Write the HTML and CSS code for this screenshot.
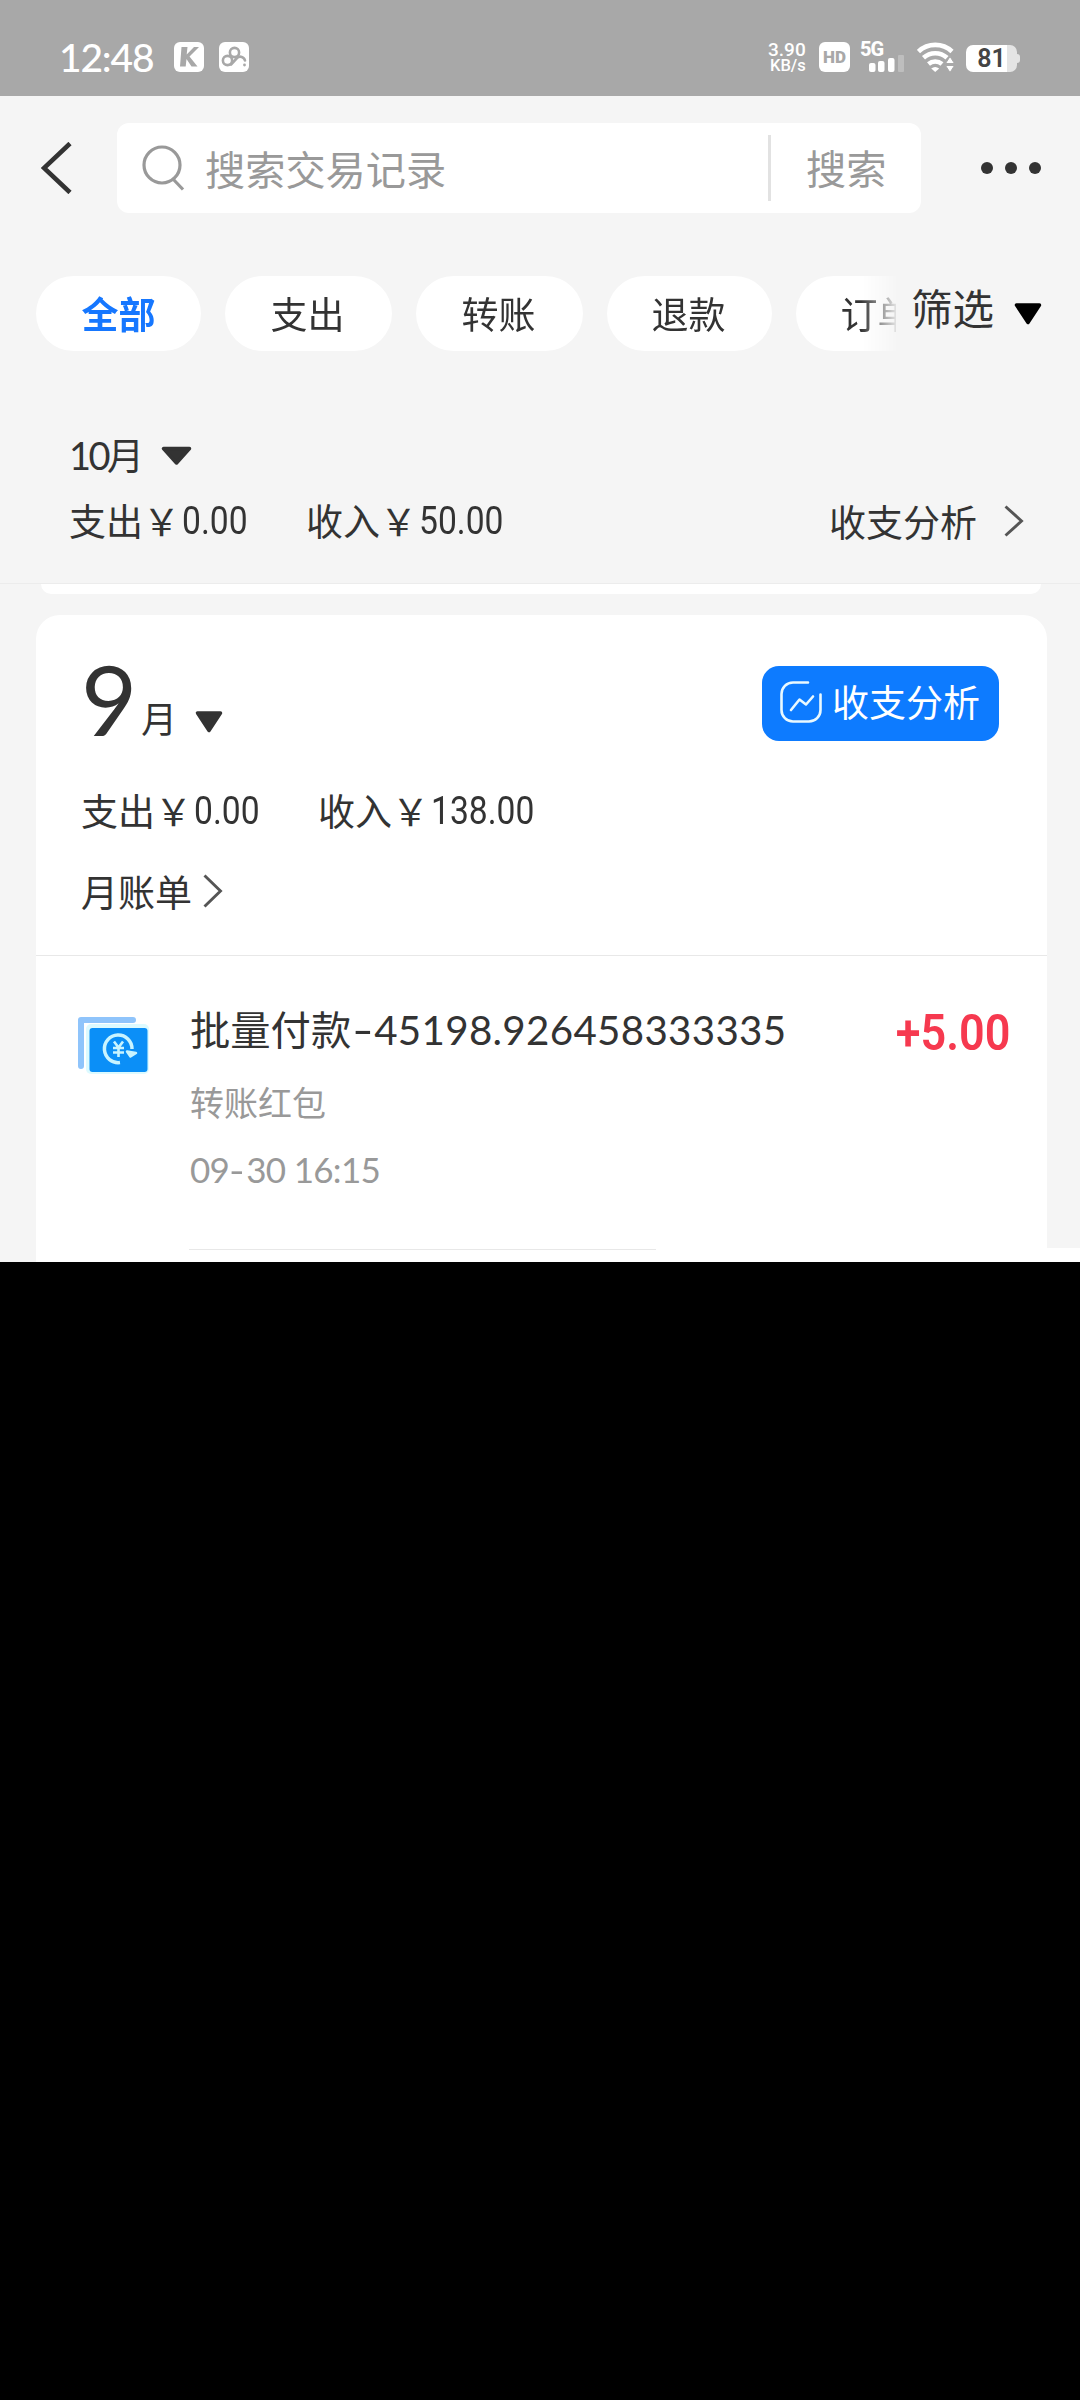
FILE: index.html
```html
<!DOCTYPE html>
<html lang="zh-CN">
<head>
<meta charset="utf-8">
<title>账单</title>
<link rel="stylesheet" href="styles.css">
</head>
<body>
<div class="screen">
  <header class="status">
    <span class="time">12:48</span>
    <svg class="app-k" width="30" height="30" viewBox="0 0 30 30"><rect width="30" height="30" rx="6" fill="#fff"/><path d="M7.500 5h6l-.8 7.500L20 5h5l-9.500 9.500L23.500 24.500h-6L12.500 17l-.8 7.500H6z" fill="#a8a8a8"/></svg>
    <svg class="app-cloud" width="30" height="30" viewBox="0 0 30 30"><rect width="30" height="30" rx="6" fill="#fff"/><g fill="none" stroke="#a8a8a8" stroke-width="2.600" stroke-linecap="round"><circle cx="15.500" cy="10.500" r="4.600"/><circle cx="8.500" cy="18.500" r="4.600"/><path d="M12 22.500l6-6.500a4.800 4.800 0 0 1 8 2.500"/></g><circle cx="25.500" cy="23" r="1.400" fill="#a8a8a8"/></svg>
    <div class="speed"><span>3.90</span><span>KB/s</span></div>
    <span class="hd">HD</span>
    <div class="signal">
      <span class="gen">5G</span>
      <svg width="36" height="17" viewBox="0 0 36 17" fill="#fff"><rect y="8" width="6.500" height="9" rx="2"/><rect x="9" y="6" width="6.500" height="11" rx="2"/><rect x="19" y="3" width="6.500" height="14" rx="2"/><rect x="29" width="6" height="17" rx="1" opacity=".25"/></svg>
    </div>
    <svg class="wifi" width="37" height="30" viewBox="0 0 37 30"><g fill="none" stroke="#fff" stroke-width="4.600"><path d="M1.500 9.500a24.500 24.500 0 0 1 33.500 0"/><path d="M6.500 15.800a17.500 17.500 0 0 1 23.500 0"/><path d="M11.500 22a10.500 10.500 0 0 1 13.500 0"/></g><path d="M14.200 26.500q4-3 8 0l-4 3.500z" fill="#fff"/><path d="M33 14.500l4.500 7h-9zM33 30.500l-4.500-7h9z" fill="#fff" stroke="#a8a8a8" stroke-width="1"/></svg>
    <div class="battery"><span>81</span></div>
  </header>

  <nav class="topbar">
    <svg class="back" width="32" height="52" viewBox="0 0 32 52"><path d="M29 1.500L3 26L29 50.500" fill="none" stroke="#333" stroke-width="4.600"/></svg>
    <div class="search">
      <svg width="44" height="48" viewBox="0 0 44 48" fill="none" stroke="#999" stroke-width="3.200"><circle cx="20" cy="21" r="18"/><path d="M31 35l10 10.500"/></svg>
      <span class="placeholder">搜索交易记录</span>
      <span class="search-btn">搜索</span>
    </div>
    <div class="more"><i></i><i></i><i></i></div>
  </nav>

  <div class="filters">
    <div class="chips">
      <span class="chip active">全部</span>
      <span class="chip mid">支出</span>
      <span class="chip mid">转账</span>
      <span class="chip">退款</span>
      <span class="chip">订单</span>
    </div>
    <span class="filter">筛选</span>
    <svg class="filter-arrow" width="28" height="22" viewBox="0 0 28 22"><path d="M2.500 2h23L14 19.500z" stroke="#000" stroke-width="3.500" stroke-linejoin="round"/></svg>
  </div>

  <section class="sticky">
    <div class="month-row">
      <span class="month"><span class="latin">10</span>月</span>
      <svg width="31" height="20" viewBox="0 0 31 20"><path d="M2.500 2.500h26L15.500 17z" fill="#333" stroke="#333" stroke-width="3.500" stroke-linejoin="round"/></svg>
    </div>
    <div class="totals">
      <span class="total"><span>支出￥</span><span class="num">0.00</span></span>
      <span class="total"><span>收入￥</span><span class="num">50.00</span></span>
      <span class="analysis">收支分析</span>
      <svg width="20" height="32" viewBox="0 0 20 32"><path d="M1.500 1.500L17.500 16L1.500 30.500" fill="none" stroke="#555" stroke-width="2.900"/></svg>
    </div>
  </section>
  <div class="prev-card"></div>

  <section class="card">
    <div class="summary">
      <div class="heading">
        <span class="big">9</span><span class="unit">月</span>
        <svg class="tri" width="28" height="22" viewBox="0 0 28 22"><path d="M2.500 2h23L14 19.500z" fill="#333" stroke="#333" stroke-width="3.500" stroke-linejoin="round"/></svg>
        <span class="button">
          <svg width="42" height="42" viewBox="0 0 42 42" fill="none" stroke="#e9f9ff" stroke-width="2.600" stroke-linecap="round"><path d="M28 1.500H13A11.500 11.500 0 0 0 1.500 13v16A11.500 11.500 0 0 0 13 40.500h16A11.500 11.500 0 0 0 40.500 29V13.500"/><path d="M11 29l8.500-10.500 6.500 5 7-8" stroke-linejoin="round"/></svg>
          收支分析
        </span>
      </div>
      <div class="totals">
        <span class="total"><span>支出￥</span><span class="num">0.00</span></span>
        <span class="total"><span>收入￥</span><span class="num">138.00</span></span>
      </div>
      <div class="bill">
        <span>月账单</span>
        <svg width="20" height="34" viewBox="0 0 20 34"><path d="M1.500 1.500L17.500 17L1.500 32.500" fill="none" stroke="#555" stroke-width="2.900"/></svg>
      </div>
    </div>
    <article class="record">
      <svg class="record-icon" width="72" height="58" viewBox="0 0 72 58">
        <path d="M4 50V4H56" fill="none" stroke="#8fc4fb" stroke-width="6" stroke-linejoin="round" stroke-linecap="round"/>
        <rect x="9" y="8" width="63" height="50" rx="5" fill="#dcfaff"/>
        <rect x="12.500" y="12" width="58" height="44" rx="3" fill="#0b8ff7"/>
        <path d="M43 46.500A13.800 13.800 0 1 1 55 33" fill="none" stroke="#c9f4ff" stroke-width="3.500"/>
        <path d="M50 35.500l9 1.500-5.500 3.500z" fill="#c9f4ff" stroke="#c9f4ff" stroke-width="2.500" stroke-linejoin="round"/>
        <path d="M37 25.500l4.500 6 4.500-6M41.500 31v10M36 32h11M36 36.500h11" fill="none" stroke="#c9f4ff" stroke-width="2.600"/>
      </svg>
      <div class="record-body">
        <span class="title">批量付款<span class="latin"><span class="dash">-</span>45198.926458333335</span></span>
        <span class="kind">转账红包</span>
        <span class="date">09<span class="dash">-</span>30 16:15</span>
      </div>
      <span class="amount">+5.00</span>
    </article>
  </section>
  <div class="tail"><i></i></div>
</div>
</body>
</html>
```
FILE: styles.css
```css
* { box-sizing: border-box; }
body {
  margin: 0;
  background: #000;
  color: #333;
  font-family: "Noto Sans CJK SC", sans-serif;
}
svg { display: block; flex: none; }
span, i { flex: none; white-space: nowrap; }
.screen {
  width: 1080px;
  height: 1262px;
  background: #f5f5f5;
  overflow: hidden;
}
.latin { font-family: Lato, sans-serif; }
.dash { display: inline-block; transform: scaleX(1.2); transform-origin: 0 50%; }

/* status bar */
.status {
  height: 96px;
  padding: 42px 0 0 59px;
  display: flex;
  align-items: flex-start;
  background: #a8a8a8;
  color: #fff;
}
.time {
  width: 115px;
  font: 500 39px/30px Lato, sans-serif;
  letter-spacing: -1.2px;
}
.app-cloud { margin-left: 15px; }
.speed {
  width: 50px;
  margin-left: 519px;
  display: flex;
  flex-direction: column;
  font: 500 19px/15px Roboto, sans-serif;
}
.speed span + span { font-size: 16.500px; line-height: 18px; padding-left: 2px; }
.hd {
  width: 31px;
  height: 30px;
  margin-left: 1px;
  border-radius: 6px;
  background: #fff;
  color: #a8a8a8;
  text-align: center;
  font: 900 17px/31px Roboto, sans-serif;
}
.signal {
  width: 47px;
  margin-left: 10px;
}
.gen {
  display: block;
  height: 14px;
  font: 800 20px/15px Roboto, sans-serif;
  letter-spacing: -1px;
}
.signal svg { margin-left: 9px; margin-top: -1px; }
.wifi { margin-left: 10px; }
.battery {
  width: 51px;
  height: 27px;
  margin: 3px 0 0 12px;
  position: relative;
  border-radius: 7px;
  background: linear-gradient(90deg, #fff 41px, #e4e4e4 41px);
  color: #444;
  text-align: center;
  font: 600 25px/28px Roboto, sans-serif;
}
.battery::after {
  content: "";
  position: absolute;
  left: 51px;
  top: 9px;
  width: 3px;
  height: 9px;
  border-radius: 0 3px 3px 0;
  background: #e4e4e4;
}

/* search */
.topbar {
  height: 144px;
  padding-left: 41px;
  display: flex;
  align-items: center;
}
.search {
  width: 804px;
  height: 90px;
  margin-left: 44px;
  padding-left: 25px;
  display: flex;
  align-items: center;
  border-radius: 12px;
  background: #fff;
  color: #999;
  font-size: 40.200px;
  line-height: 64px;
}
.placeholder { width: 563px; margin-left: 19px; }
.search-btn {
  height: 66px;
  padding-left: 35px;
  border-left: 3px solid #e2e2e2;
}
.more {
  display: flex;
  gap: 12px;
  margin-left: 60px;
}
.more i { width: 12px; height: 12px; border-radius: 50%; background: #333; }

/* filters */
.filters {
  height: 160px;
  padding: 36px 0 0 36px;
  display: flex;
}
.chips {
  width: 860px;
  height: 75px;
  display: flex;
  gap: 24px;
  overflow: hidden;
  -webkit-mask-image: linear-gradient(90deg, #000 825px, rgba(0, 0, 0, .1) 860px);
  mask-image: linear-gradient(90deg, #000 825px, rgba(0, 0, 0, .1) 860px);
}
.chip {
  width: 165px;
  padding-right: 2px;
  border-radius: 38px;
  background: #fff;
  text-align: center;
  font-size: 37px;
  line-height: 74px;
}
.chip.mid { width: 167px; }
.chip.active { padding-right: 0; color: #1677ff; font-weight: 700; }
.filter {
  margin-left: 15px;
  font-size: 41.500px;
  line-height: 63px;
}
.filter-arrow { margin: 27px 0 0 20px; }

/* pinned month */
.sticky {
  height: 184px;
  padding: 33px 0 0 69px;
  border-bottom: 1px solid #ececec;
  font-size: 37px;
}
.month-row {
  height: 45px;
  display: flex;
  align-items: center;
}
.month { width: 92px; margin-top: -2px; line-height: 45px; font-size: 37px; }
.month .latin { display: inline-block; width: 38px; letter-spacing: -2.500px; font-size: 38px; }
.totals {
  display: flex;
  align-items: center;
  font-size: 37px;
  line-height: 50px;
}
.sticky .totals { margin-top: 17px; }
.total { width: 237px; display: flex; }
.total > span:first-child { width: 113px; }
.num {
  width: 0;
  padding-top: 1px;
  font-family: Roboto, sans-serif;
  font-size: 38px;
  transform: scaleX(.885);
  transform-origin: 0 50%;
}
.analysis { width: 175px; margin-left: 286px; }
.prev-card {
  width: 1000px;
  height: 10px;
  margin: 0 0 21px 41px;
  border-radius: 0 0 10px 10px;
  background: #fff;
}

/* month card */
.card {
  width: 1011px;
  height: 633px;
  margin-left: 36px;
  border-radius: 24px 24px 0 0;
  background: #fff;
}
.summary {
  height: 341px;
  padding: 51px 48px 0 45px;
  border-bottom: 1px solid #e8e8e8;
}
.heading {
  height: 75px;
  display: flex;
}
.big {
  width: 60px;
  font: 400 97px/66px Lato, sans-serif;
}
.unit { width: 54px; font-size: 36px; line-height: 102px; }
.tri { margin-top: 45px; }
.button {
  width: 237px;
  height: 75px;
  margin-left: auto;
  padding: 0 0 6px 18px;
  display: flex;
  align-items: center;
  gap: 10px;
  border-radius: 17px;
  background: #0d7bff;
  color: #fff;
  font-size: 37px;
  line-height: 66px;
}
.button svg { margin-top: 3px; }
.summary .totals { margin-top: 44px; }
.bill {
  height: 50px;
  margin-top: 30px;
  display: flex;
  align-items: center;
  font-size: 37px;
  line-height: 50px;
}
.bill span { width: 122px; }

/* transaction */
.record {
  height: 292px;
  padding: 46px 37px 0 41px;
  display: flex;
}
.record-icon { margin-top: 14px; }
.record-body {
  width: 620px;
  margin-left: 41px;
  display: flex;
  flex-direction: column;
}
.title { font-size: 40.300px; line-height: 52px; }
.title .latin { letter-spacing: .3px; }
.title .dash { width: 22px; margin-left: 1px; transform: scaleX(1.45); }
.kind { margin-top: 24px; color: #999; font-size: 34px; line-height: 44px; }
.date { margin-top: 23px; color: #999; font: 400 35px/44px Lato, sans-serif; letter-spacing: -.7px; }
.date .dash { width: 17px; }
.amount {
  margin-left: auto;
  color: #f6394f;
  font: 600 50px/62px Roboto, sans-serif;
  transform: scaleX(.9);
  transform-origin: 100% 50%;
}
.tail {
  height: 14px;
  padding: 1px 0 0 189px;
  background: linear-gradient(90deg, #f5f5f5 36px, #fff 36px);
}
.tail i { display: block; width: 467px; height: 1px; background: #e8e8e8; }
```
